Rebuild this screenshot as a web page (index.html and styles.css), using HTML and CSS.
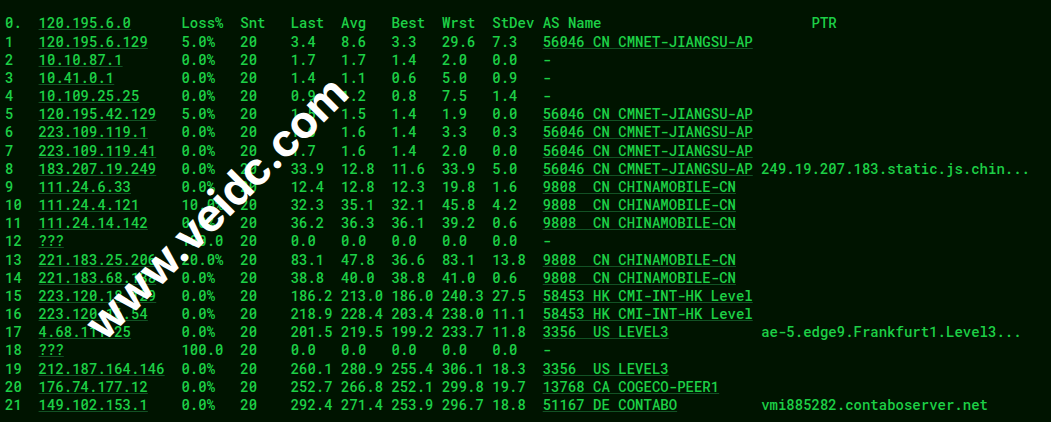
FILE: index.html
```html
<!DOCTYPE html>
<html lang="en">
<head>
<meta charset="utf-8">
<title>MTR trace</title>
<link rel="stylesheet" href="styles.css">
</head>
<body>
<main class="terminal">
<pre class="trace">0.  <a class="ln">120.195.6.0</a>      Loss%  Snt   Last  Avg   Best  Wrst  StDev AS Name                         PTR
1   <a class="ln">120.195.6.129</a>    5.0%   20    3.4   8.6   3.3   29.6  7.3   <a class="ln">56046 CN CMNET-JIANGSU-AP</a>
2   <a class="ln">10.10.87.1</a>       0.0%   20    1.7   1.7   1.4   2.0   0.0   -
3   <a class="ln">10.41.0.1</a>        0.0%   20    1.4   1.1   0.6   5.0   0.9   -
4   <a class="ln">10.109.25.25</a>     0.0%   20    0.9   1.2   0.8   7.5   1.4   -
5   <a class="ln">120.195.42.129</a>   5.0%   20    1.5   1.5   1.4   1.9   0.0   <a class="ln">56046 CN CMNET-JIANGSU-AP</a>
6   <a class="ln">223.109.119.1</a>    0.0%   20    1.6   1.6   1.4   3.3   0.3   <a class="ln">56046 CN CMNET-JIANGSU-AP</a>
7   <a class="ln">223.109.119.41</a>   0.0%   20    1.7   1.6   1.4   2.0   0.0   <a class="ln">56046 CN CMNET-JIANGSU-AP</a>
8   <a class="ln">183.207.19.249</a>   0.0%   20    33.9  12.8  11.6  33.9  5.0   <a class="ln">56046 CN CMNET-JIANGSU-AP</a> 249.19.207.183.static.js.chin...
9   <a class="ln">111.24.6.33</a>      0.0%   20    12.4  12.8  12.3  19.8  1.6   <a class="ln">9808  CN CHINAMOBILE-CN</a>
10  <a class="ln">111.24.4.121</a>     10.0%  20    32.3  35.1  32.1  45.8  4.2   <a class="ln">9808  CN CHINAMOBILE-CN</a>
11  <a class="ln">111.24.14.142</a>    0.0%   20    36.2  36.3  36.1  39.2  0.6   <a class="ln">9808  CN CHINAMOBILE-CN</a>
12  <a class="ln">???</a>              100.0  20    0.0   0.0   0.0   0.0   0.0   -
13  <a class="ln">221.183.25.206</a>   20.0%  20    83.1  47.8  36.6  83.1  13.8  <a class="ln">9808  CN CHINAMOBILE-CN</a>
14  <a class="ln">221.183.68.138</a>   0.0%   20    38.8  40.0  38.8  41.0  0.6   <a class="ln">9808  CN CHINAMOBILE-CN</a>
15  <a class="ln">223.120.18.129</a>   0.0%   20    186.2 213.0 186.0 240.3 27.5  <a class="ln">58453 HK CMI-INT-HK Level</a>
16  <a class="ln">223.120.16.54</a>    0.0%   20    218.9 228.4 203.4 238.0 11.1  <a class="ln">58453 HK CMI-INT-HK Level</a>
17  <a class="ln">4.68.111.25</a>      0.0%   20    201.5 219.5 199.2 233.7 11.8  <a class="ln">3356  US LEVEL3</a>           ae-5.edge9.Frankfurt1.Level3...
18  <a class="ln">???</a>              100.0  20    0.0   0.0   0.0   0.0   0.0   -
19  <a class="ln">212.187.164.146</a>  0.0%   20    260.1 280.9 255.4 306.1 18.3  <a class="ln">3356  US LEVEL3</a>
20  <a class="ln">176.74.177.12</a>    0.0%   20    252.7 266.8 252.1 299.8 19.7  <a class="ln">13768 CA COGECO-PEER1</a>
21  <a class="ln">149.102.153.1</a>    0.0%   20    292.4 271.4 253.9 296.7 18.8  <a class="ln">51167 DE CONTABO</a>          vmi885282.contaboserver.net</pre>
<div class="mark">www.veidc.com</div>
</main>
</body>
</html>
```

FILE: styles.css
```css
html, body {
  margin: 0;
  height: 100%;
  overflow: hidden;
  background: #001400;
}
.terminal {
  position: relative;
  height: 422px;
  padding: 14.4px 0 0 5px;
  box-sizing: border-box;
  overflow: hidden;
}
.trace {
  margin: 0;
  font-family: "Roboto Mono", "DejaVu Sans Mono", "Liberation Mono", monospace;
  font-size: 14px;
  font-weight: 500;
  line-height: 18.17px;
  color: #1dcf46;
}
.ln {
  text-decoration: underline 1px #125224;
  text-decoration-skip-ink: none;
  text-underline-offset: 1px;
}
.mark {
  position: absolute;
  left: 216px;
  top: 208px;
  font-family: Inter, sans-serif;
  font-weight: 700;
  font-size: 45px;
  letter-spacing: -0.6px;
  line-height: 48px;
  color: #fff;
  white-space: nowrap;
  transform: translate(-50%, -50%) rotate(-45deg);
}
```
